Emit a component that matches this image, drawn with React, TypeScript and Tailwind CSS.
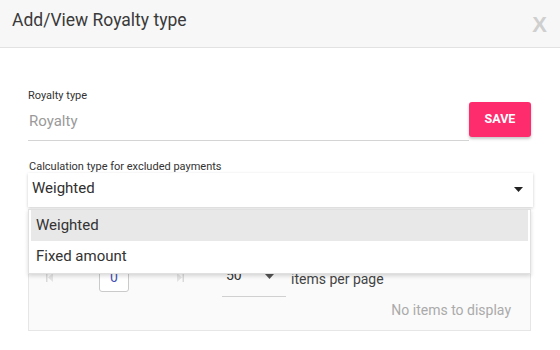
import React from "react";

// pager glyphs, drawn faint like the reference
function FirstIcon() {
  return (
    <svg width="7" height="9" viewBox="0 0 7 9" className="block">
      <rect x="0" y="0" width="1.5" height="9" fill="#d9d9d9" />
      <polygon points="7,0 7,9 2,4.5" fill="#e3e3e3" />
    </svg>
  );
}

function LastIcon() {
  return (
    <svg width="7" height="9" viewBox="0 0 7 9" className="block">
      <polygon points="0,0 0,9 5,4.5" fill="#e3e3e3" />
      <rect x="5.5" y="0" width="1.5" height="9" fill="#d9d9d9" />
    </svg>
  );
}

function Caret({ color = "#222" }: { color?: string }) {
  return (
    <svg width="9" height="5" viewBox="0 0 9 5" className="block">
      <polygon points="0,0 9,0 4.5,5" fill={color} />
    </svg>
  );
}

const OPTIONS = ["Weighted", "Fixed amount"];

export default function App() {
  return (
    <div className="relative w-[560px] h-[350px] overflow-hidden bg-white font-['Roboto',sans-serif] text-[#333]">
      {/* === Header === */}
      <div className="flex h-[48px] items-start justify-between border-b border-[#e2e2e2] bg-[#f7f7f7] pl-[12px] pr-[13px]">
        <div className="pt-[10px] text-[17.5px] leading-[21px] text-[#3a3a3a]">
          Add/View Royalty type
        </div>
        <div className="pt-[12px] font-['Liberation_Sans',sans-serif] text-[22px] font-bold leading-[26px] text-[#cfcfcf]">
          X
        </div>
      </div>

      {/* === Body === */}
      <div className="pl-[28px] pr-[27px] pt-[41px]">
        {/* Royalty type row */}
        <div className="flex items-start">
          <div className="flex-1">
            <div className="text-[11px] leading-[13px] text-[#333]">Royalty type</div>
            <div className="mt-[9px] border-b border-[#d4d4d4] pb-[9px] pl-[1px] text-[15px] leading-[20px] text-[#9a9a9a]">
              Royalty
            </div>
          </div>
          <button className="mr-[2px] mt-[13px] h-[35px] w-[62px] rounded-[3px] bg-[#ff2c6d] text-[12.5px] font-bold text-white shadow-[0_2px_3px_rgba(0,0,0,0.22)]">
            SAVE
          </button>
        </div>

        {/* Calculation type select */}
        <div className="mt-[20px] pl-[1px] text-[11px] leading-[12px] text-[#333]">
          Calculation type for excluded payments
        </div>
        <div className="flex h-[34px] items-start justify-between bg-white pl-[4px] pr-[10px] pt-[5px] shadow-[0_1px_3px_rgba(0,0,0,0.2)]">
          <span className="text-[15px] leading-[20px] text-[#2f2f2f]">Weighted</span>
          <span className="pt-[9px]">
            <Caret />
          </span>
        </div>

        {/* Grid with pager */}
        <div className="mr-[2px] mt-[12px] border border-[#e6e6e6] bg-[#fafafa]">
          <div className="h-[43px]" />
          <div className="flex items-start">
            <div className="ml-[17px] mt-[10px]">
              <FirstIcon />
            </div>
            <div className="ml-[46px] flex h-[29px] w-[30px] items-center justify-center rounded-[3px] border border-[#cacaca] bg-white text-[14px] text-[#3f51b5]">
              0
            </div>
            <div className="ml-[48px] mt-[10px]">
              <LastIcon />
            </div>
            <div className="ml-[38px] flex h-[34px] w-[64px] items-start justify-between border-b border-[#d0d0d0] pl-[4px] pr-[12px] pt-[2px]">
              <span className="text-[14px] leading-[20px] text-[#333]">50</span>
              <span className="pt-[9px]">
                <Caret color="#555" />
              </span>
            </div>
            <div className="ml-[5px] mt-[6px] text-[14px] leading-[20px] text-[#444]">
              items per page
            </div>
          </div>
          <div className="mt-[3px] pb-[10px] pr-[19px] text-right text-[14px] leading-[20px] text-[#aaaaaa]">
            No items to display
          </div>
        </div>
      </div>

      {/* === Open dropdown list (overlay) === */}
      <div className="absolute left-[28px] top-[209px] w-[503px] border border-[#e0e0e0] bg-white px-[2px] pb-[1px] shadow-[0_2px_4px_rgba(0,0,0,0.15)]">
        {OPTIONS.map((opt, i) => (
          <div
            key={opt}
            className={`h-[31px] pl-[5px] pt-[5px] text-[15px] leading-[20px] text-[#333] ${
              i === 0 ? "bg-[#e8e8e8]" : "bg-white"
            }`}
          >
            {opt}
          </div>
        ))}
      </div>
    </div>
  );
}
